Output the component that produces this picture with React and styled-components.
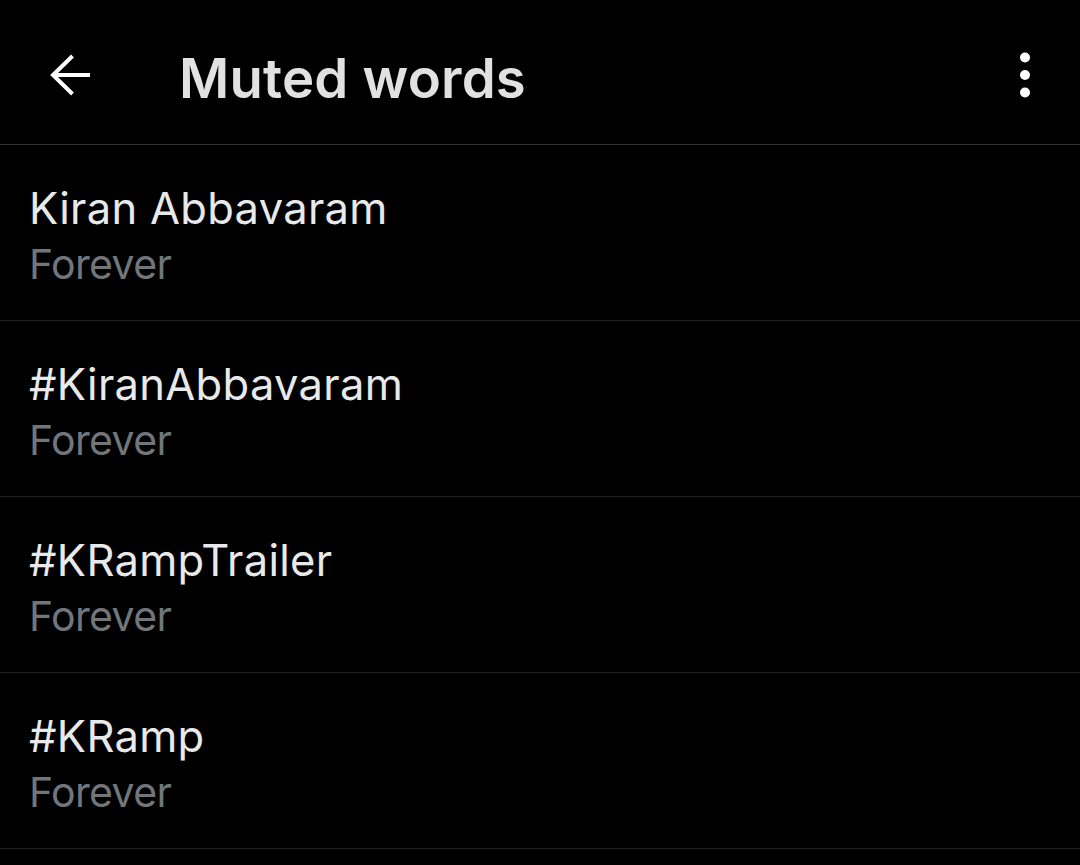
import React from "react";
import styled, { createGlobalStyle } from "styled-components";

const Global = createGlobalStyle`
  html, body { margin: 0; padding: 0; background: #000; }
  body { font-family: Inter, "Noto Sans", sans-serif; -webkit-font-smoothing: antialiased; }
`;

const Page = styled.div`
  width: 1080px;
  min-height: 865px;
  background: #000;
  color: #e7e9ea;
`;

const Header = styled.header`
  height: 145px;
  display: flex;
  align-items: center;
  border-bottom: 1px solid #333639;
  box-sizing: border-box;
  padding: 5px 35px 0 48px;
`;

const IconButton = styled.button`
  background: none;
  border: 0;
  padding: 0;
  display: flex;
  align-items: center;
  justify-content: center;
  color: #fff;
  width: ${p => p.$w}px;
  height: 60px;
`;

const Title = styled.h1`
  margin: 0 0 0 87px;
  flex: 1;
  font-size: 54.5px;
  font-weight: 600;
  color: #e1e1e1;
  letter-spacing: 0.2px;
  line-height: 1;
  padding-top: 7px;
`;

const List = styled.ul`
  list-style: none;
  margin: 0;
  padding: 0;
`;

const Row = styled.li`
  height: 176px;
  box-sizing: border-box;
  border-bottom: 1px solid #1f2124;
  padding: 35px 29px 0;
  display: flex;
  flex-direction: column;
`;

const Word = styled.div`
  font-size: 43.5px;
  line-height: 56px;
  letter-spacing: 0.3px;
  color: #e7e9ea;
  font-weight: 400;
`;

const Duration = styled.div`
  font-size: 41px;
  line-height: 56px;
  letter-spacing: -0.6px;
  color: #71767b;
`;

const words = ["Kiran Abbavaram", "#KiranAbbavaram", "#KRampTrailer", "#KRamp"];

export default function App() {
  return (
    <Page>
      <Global />
      <Header>
        <IconButton $w={44} aria-label="Back">
          <svg width="44" height="44" viewBox="0 0 44 44" fill="none" stroke="#fff" strokeWidth="4">
            <path d="M42 22H5" />
            <path d="M24.5 3L5 22L24.5 41" />
          </svg>
        </IconButton>
        <Title>Muted words</Title>
        <IconButton $w={40} aria-label="More">
          <svg width="12" height="46" viewBox="0 0 12 46" fill="#fff">
            <circle cx="6" cy="5.5" r="5" />
            <circle cx="6" cy="23" r="5" />
            <circle cx="6" cy="40.5" r="5" />
          </svg>
        </IconButton>
      </Header>
      <List>
        {words.map(w => (
          <Row key={w}>
            <Word>{w}</Word>
            <Duration>Forever</Duration>
          </Row>
        ))}
      </List>
    </Page>
  );
}
